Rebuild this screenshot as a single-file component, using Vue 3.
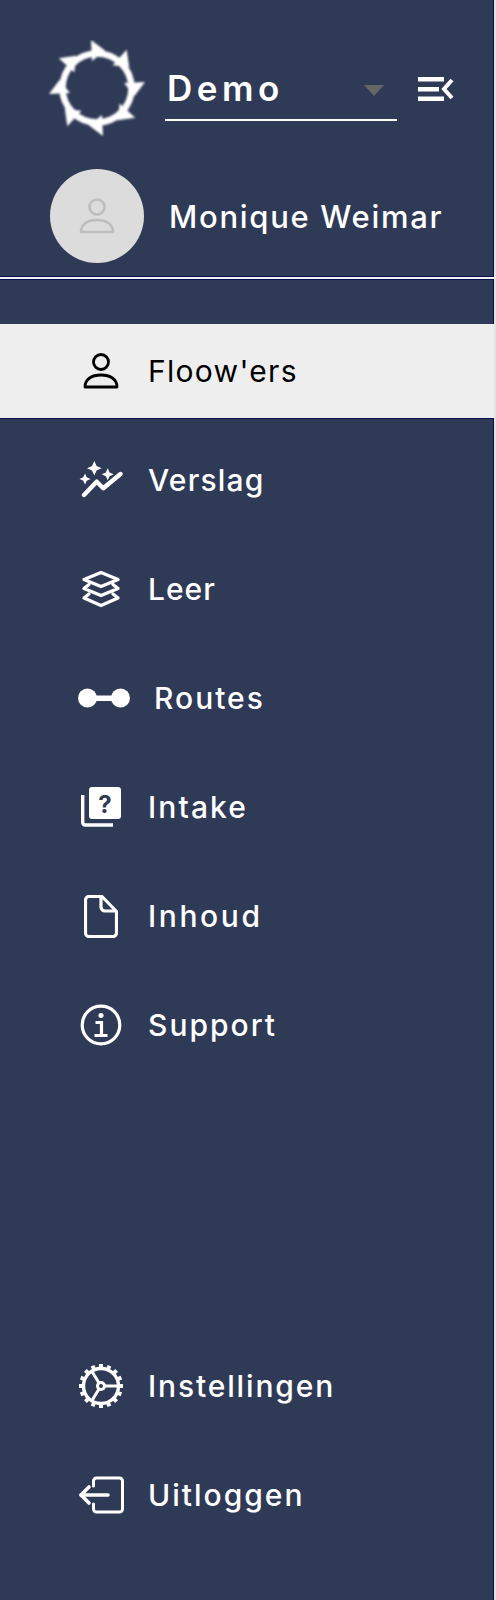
<script setup>
const items = [
  { label: "Floow'ers", icon: 'user', active: true, ls: 1.3 },
  { label: 'Verslag', icon: 'chart', ls: 1.2 },
  { label: 'Leer', icon: 'layers', ls: 1 },
  { label: 'Routes', icon: 'route', wide: true, ls: 2 },
  { label: 'Intake', icon: 'quiz', ls: 2.1 },
  { label: 'Inhoud', icon: 'file', ls: 2.6 },
  { label: 'Support', icon: 'info', ls: 2 },
]
const bottomItems = [
  { label: 'Instellingen', icon: 'gear', ls: 1.85 },
  { label: 'Uitloggen', icon: 'logout', ls: 2 },
]
const arrows = [0, 45, 90, 135, 180, 225, 270, 315]
const teeth = Array.from({ length: 16 }, (_, i) => i * 22.5)
</script>

<template>
  <aside class="sidebar">
    <header class="top">
      <div class="brand">
        <svg class="logo" viewBox="0 0 98 98" aria-hidden="true">
          <defs>
            <filter id="soft" x="-5%" y="-5%" width="110%" height="110%">
              <feGaussianBlur stdDeviation="0.8" />
            </filter>
          </defs>
          <g filter="url(#soft)">
            <circle cx="49" cy="48" r="34.500" fill="none" stroke="#fff" stroke-width="6.500" />
            <polygon
              v-for="a in arrows"
              :key="a"
              points="43,0 57,10.500 44,21"
              fill="#fff"
              :transform="`rotate(${a} 49 48)`"
            />
          </g>
        </svg>
        <div class="select">
          <span class="select-text">Demo</span>
          <span class="caret"></span>
        </div>
        <svg class="collapse" viewBox="0 0 36 24" aria-hidden="true">
          <path d="M0 2.300h26M0 12.200h21M0 21.700h26" stroke="#fff" stroke-width="4.600" fill="none" />
          <path d="M34 3 26 12l8 9" stroke="#fff" stroke-width="4" fill="none" />
        </svg>
      </div>
      <div class="profile">
        <div class="avatar">
          <svg viewBox="0 0 36 38" aria-hidden="true">
            <circle cx="18" cy="10" r="7.500" fill="none" stroke="#bdbdbd" stroke-width="2.600" />
            <path d="M2 35c0-8 7-12 16-12s16 4 16 12Z" fill="none" stroke="#bdbdbd" stroke-width="2.600" stroke-linejoin="round" />
          </svg>
        </div>
        <span class="name">Monique Weimar</span>
      </div>
    </header>
    <div class="rule"></div>

    <nav class="menu">
      <a
        v-for="item in items"
        :key="item.label"
        class="row"
        :class="{ active: item.active, wide: item.wide }"
      >
        <span class="ico">
          <svg v-if="item.icon === 'user'" width="36" height="38" viewBox="0 0 36 38" fill="none" stroke="currentColor" stroke-width="2.800">
            <circle cx="18" cy="10" r="7.500" />
            <path d="M2 35c0-8 7-12 16-12s16 4 16 12Z" stroke-linejoin="round" />
          </svg>
          <svg v-else-if="item.icon === 'chart'" width="44" height="38" viewBox="0 0 44 38" fill="none">
            <path d="M5 34 17.700 20.700 24.300 27.300 41.500 13" stroke="#fff" stroke-width="4.400" stroke-linecap="round" stroke-linejoin="round" />
            <path d="M15.300 0l2.300 5 5 2.300-5 2.300-2.300 5-2.300-5-5-2.300 5-2.300ZM28.700 7.300l1.900 4.100 4.100 1.900-4.100 1.900-1.900 4.100-1.900-4.100-4.100-1.900 4.100-1.900ZM6 12.500l1.700 3.800 3.800 1.700-3.800 1.700-1.700 3.800-1.700-3.800-3.800-1.700 3.800-1.700Z" fill="#fff" />
          </svg>
          <svg v-else-if="item.icon === 'layers'" width="40" height="38" viewBox="0 0 40 38" fill="none" stroke="#fff" stroke-width="3.400" stroke-linejoin="round" stroke-linecap="round">
            <path d="M20 2.500 37 9.500 20 16.500 3 9.500Z" />
            <path d="M8 14.500 3 18.500 20 25.500l17-7-5-4" />
            <path d="M8 24 3 28 20 35.500l17-7.500-5-4" />
          </svg>
          <svg v-else-if="item.icon === 'route'" class="route" width="52" height="20" viewBox="0 0 52 20" fill="#fff">
            <circle cx="9.500" cy="10" r="9.500" />
            <circle cx="42.500" cy="10" r="9.500" />
            <rect x="15" y="7.500" width="22" height="5.500" />
          </svg>
          <svg v-else-if="item.icon === 'quiz'" width="40" height="40" viewBox="0 0 40 40">
            <rect x="8" y="0" width="32" height="32" rx="3" fill="#fff" />
            <path d="M1.700 8v27.500a2.500 2.500 0 0 0 2.500 2.500H32" fill="none" stroke="#fff" stroke-width="3.400" />
            <text x="24" y="25.500" class="q">?</text>
          </svg>
          <svg v-else-if="item.icon === 'file'" width="34" height="43" viewBox="0 0 34 43" fill="none" stroke="#fff" stroke-width="3.200" stroke-linejoin="round">
            <path d="M5 1.500h13l14.500 15V38a3.500 3.500 0 0 1-3.500 3.500H5A3.500 3.500 0 0 1 1.500 38V5A3.500 3.500 0 0 1 5 1.500Z" />
            <path d="M17 1.500V12a4 4 0 0 0 4 4h11" />
          </svg>
          <svg v-else width="42" height="42" viewBox="0 0 42 42" fill="none" stroke="#fff">
            <circle cx="21" cy="21" r="18.800" stroke-width="3.200" />
            <circle cx="21" cy="11.500" r="2.600" fill="#fff" stroke="none" />
            <path d="M15.500 18.500h6v13M14.500 31.500h13" stroke-width="3.200" />
          </svg>
        </span>
        <span class="label" :style="{ letterSpacing: item.ls + 'px' }">{{ item.label }}</span>
      </a>
    </nav>

    <nav class="menu bottom">
      <a v-for="item in bottomItems" :key="item.label" class="row">
        <span class="ico">
          <svg v-if="item.icon === 'gear'" width="46" height="46" viewBox="0 0 46 46" fill="none" stroke="#fff">
            <circle cx="23" cy="23" r="17.500" stroke-width="3.400" />
            <rect v-for="t in teeth" :key="t" x="21" y="1" width="4" height="5" fill="#fff" stroke="none" :transform="`rotate(${t} 23 23)`" />
            <circle cx="23" cy="23" r="3.500" stroke-width="3" />
            <path d="M26.500 23H40M21 20 14 8.500M21 26 14 37.500" stroke-width="3" />
          </svg>
          <svg v-else width="46" height="38" viewBox="0 0 46 38" fill="none" stroke="#fff" stroke-width="3" stroke-linejoin="round" stroke-linecap="round">
            <path d="M15.500 10V5a3 3 0 0 1 3-3h23a3 3 0 0 1 3 3v28a3 3 0 0 1-3 3h-23a3 3 0 0 1-3-3v-5" />
            <path d="M3 19h27" stroke-width="3.600" />
            <path d="M11 11 3 19l8 8" stroke-width="3.600" />
          </svg>
        </span>
        <span class="label" :style="{ letterSpacing: item.ls + 'px' }">{{ item.label }}</span>
      </a>
    </nav>
  </aside>
</template>

<style>
html, body { margin: 0; background: #e3e3e3; }
</style>

<style scoped>
.sidebar {
  box-sizing: border-box;
  width: 494px;
  height: 1600px;
  background: #2f3a56;
  color: #fff;
  font-family: Inter, "Liberation Sans", sans-serif;
  display: flex;
  flex-direction: column;
  border-right: 1px solid #0b1150;
}
.top {
  height: 276px;
  padding: 40px 0 0 48px;
  box-sizing: border-box;
}
.brand {
  display: flex;
  align-items: flex-start;
  height: 98px;
}
.logo { width: 98px; height: 98px; flex: none; margin-right: 19px; }
.select {
  position: relative;
  box-sizing: border-box;
  width: 232px;
  height: 59px;
  margin-top: 22px;
  padding: 0 0 5px 2px;
  border-bottom: 2px solid #fff;
  display: flex;
  align-items: center;
  flex: none;
}
.select-text { font-size: 35px; font-weight: 600; letter-spacing: 4.500px; }
.caret {
  position: absolute;
  right: 13px;
  top: 23px;
  border-left: 10px solid transparent;
  border-right: 10px solid transparent;
  border-top: 11px solid #666;
}
.collapse { width: 36px; height: 24px; margin: 37px 0 0 21px; flex: none; }
.profile {
  display: flex;
  align-items: center;
  margin-top: 31px;
  padding-left: 2px;
}
.avatar {
  width: 94px;
  height: 94px;
  border-radius: 50%;
  background: #dcdcdc;
  display: flex;
  align-items: center;
  justify-content: center;
  flex: none;
  margin-right: 25px;
}
.avatar svg { width: 36px; height: 38px; }
.name { font-size: 31px; letter-spacing: 1.700px; font-weight: 500; }
.rule {
  height: 2px;
  background: #f2f2f2;
  border-top: 1px solid #0b1150;
  border-bottom: 1px solid #0b1150;
  margin-right: -1px;
}
.menu { display: flex; flex-direction: column; padding-top: 44px; }
.row {
  height: 94px;
  margin-bottom: 15px;
  display: flex;
  align-items: center;
  padding-left: 78px;
  font-size: 30px;
  font-weight: 500;
}
.row.active {
  background: #eeeeee;
  color: #000;
  font-weight: 400;
  margin-right: -1px;
  box-shadow: 0 1px 0 #0b1150;
}
.ico {
  width: 46px;
  display: flex;
  justify-content: center;
  flex: none;
  margin-right: 24px;
}
.route { flex: none; margin-left: 6px; }
.label { padding-bottom: 1px; }
.row.wide .label { margin-left: 6px; }
.q { fill: #2f3a56; font-size: 24px; font-weight: 700; text-anchor: middle; font-family: Inter, sans-serif; }
.bottom { margin-top: auto; padding: 0 0 43px; }
</style>
